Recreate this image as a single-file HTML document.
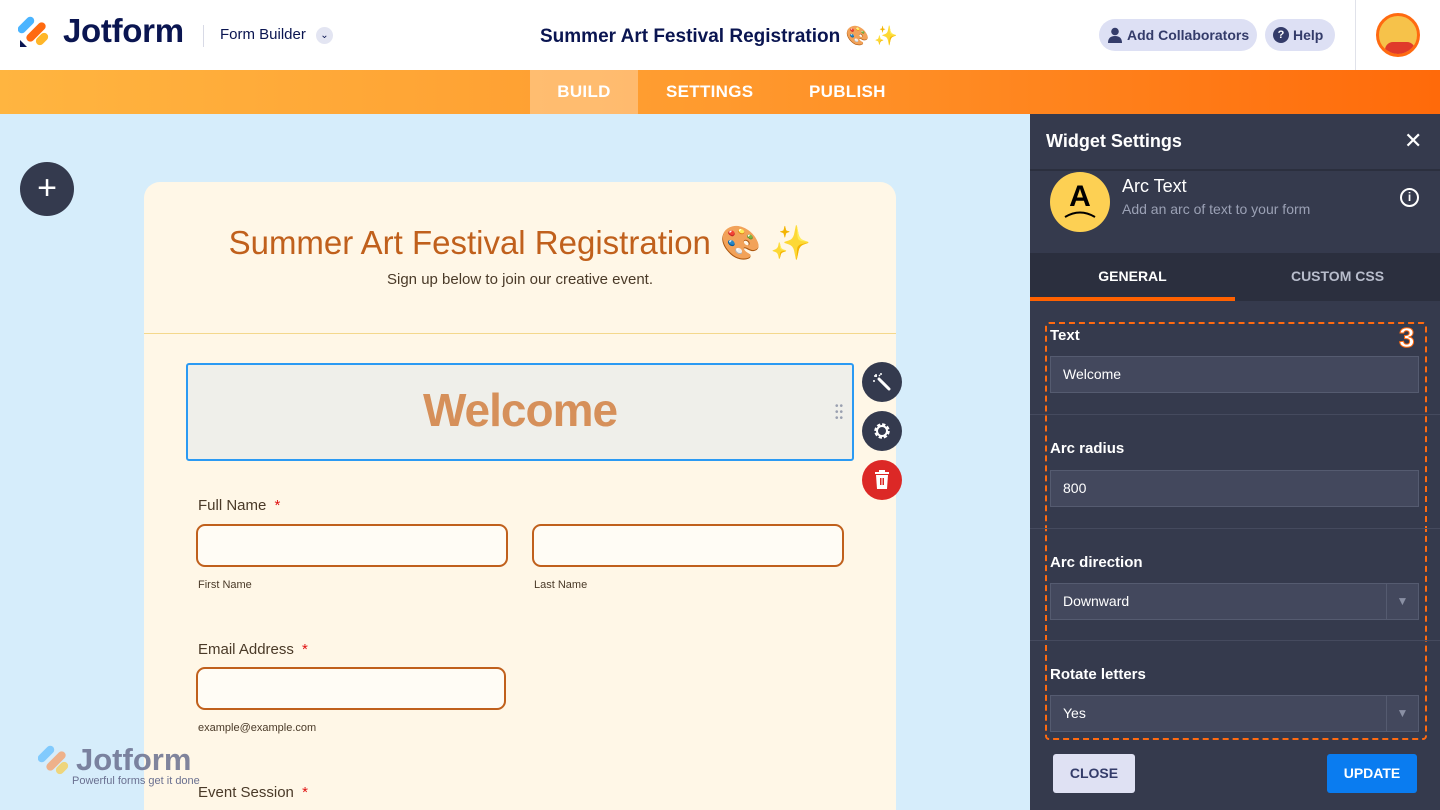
<!DOCTYPE html>
<html><head><meta charset="utf-8"><style>
*{box-sizing:border-box;margin:0;padding:0}
html,body{width:1440px;height:810px;overflow:hidden}
body{font-family:"Liberation Sans","Noto Sans CJK JP",sans-serif;background:#d6edfb;position:relative}
.abs{position:absolute}
.hdr{left:0;top:0;width:1440px;height:70px;background:#fff}
.nav{left:0;top:70px;width:1440px;height:44px;background:linear-gradient(90deg,#ffb540,#ff9a2e 50%,#ff6a0a)}
.nav div{position:absolute;top:0;height:44px;line-height:44px;color:#fff;font-weight:bold;font-size:17px;letter-spacing:.3px}
.pill{background:#dde0f4;color:#343c6a;border-radius:18px;height:32px;top:19px;font-weight:bold;font-size:14px;line-height:32px}
.card{left:144px;top:182px;width:752px;height:628px;background:#fff7e7;border-radius:16px 16px 0 0}
.lbl{color:#4a3a28;font-size:15px}
.inp{border:2px solid #c0601c;border-radius:9px;background:#fffcf5;height:43px}
.sub{color:#4a3a28;font-size:11px}
.panel{left:1030px;top:114px;width:410px;height:696px;background:#353a4d}
.fl{color:#fff;font-weight:bold;font-size:15px;left:20px}
.fi{left:20px;width:369px;height:37px;background:#43485d;border:1px solid #555b70;color:#fff;font-size:14px;line-height:35px;padding-left:12px}
.sep{left:0;width:410px;height:1px;background:#454a5e}
.rb{width:40px;height:40px;border-radius:50%;left:862px}
</style></head><body>
<div class="abs hdr"></div>
<svg class="abs" style="left:18px;top:16px" width="32" height="32" viewBox="0 0 32 32"><rect x="4" y="-1" width="8" height="20" rx="4" transform="rotate(45 8 9)" fill="#4ab4ff"/><rect x="14" y="4" width="8" height="24" rx="4" transform="rotate(45 18 16)" fill="#ff6a10"/><rect x="20" y="16" width="8" height="14" rx="4" transform="rotate(45 24 23)" fill="#ffb629"/><path d="M2 24 L2 31 L9 31Z" fill="#0a1551"/></svg>
<div class="abs" style="left:63px;top:12px;font-size:33px;font-weight:bold;color:#0a1551;letter-spacing:-.3px">Jotform</div>
<div class="abs" style="left:203px;top:25px;width:1px;height:22px;background:#d8dae6"></div>
<div class="abs" style="left:220px;top:26px;font-size:15px;color:#0a1551">Form Builder</div>
<div class="abs" style="left:316px;top:27px;width:17px;height:17px;border-radius:50%;background:#e3e5f2;color:#0a1551;font-size:10px;text-align:center;line-height:17px">⌄</div>
<div class="abs" style="left:540px;top:24px;font-size:19px;color:#0a1551;font-weight:bold">Summer Art Festival Registration 🎨 ✨</div>
<div class="abs pill" style="left:1099px;width:158px;padding-left:28px">Add Collaborators</div>
<svg class="abs" style="left:1108px;top:27px" width="14" height="16" viewBox="0 0 14 16"><circle cx="7" cy="4.5" r="3.8" fill="#343c6a"/><path d="M0 16 Q0 9 7 9 Q14 9 14 16Z" fill="#343c6a"/></svg>
<div class="abs pill" style="left:1265px;width:70px;padding-left:28px">Help</div>
<div class="abs" style="left:1273px;top:27px;width:16px;height:16px;border-radius:50%;background:#343c6a;color:#fff;font-size:11px;text-align:center;line-height:16px;font-weight:bold">?</div>
<div class="abs" style="left:1355px;top:0;width:1px;height:70px;background:#e0e2ea"></div>
<div class="abs" style="left:1376px;top:13px;width:44px;height:44px;border-radius:50%;background:#f6c24a;border:3px solid #ff6a10;overflow:hidden"><div style="position:absolute;left:6px;top:26px;width:30px;height:20px;background:#e03a2a;border-radius:8px 8px 0 0"></div></div>
<div class="abs nav"><div style="left:530px;width:108px;background:rgba(255,255,255,.3);text-align:center">BUILD</div><div style="left:666px">SETTINGS</div><div style="left:809px">PUBLISH</div></div>
<div class="abs" style="left:20px;top:162px;width:54px;height:54px;border-radius:50%;background:#343a4e;color:#fff;font-size:34px;text-align:center;line-height:52px">+</div>
<div class="abs card"></div>
<div class="abs" style="left:144px;top:224px;width:752px;text-align:center;font-size:33px;color:#c0601c">Summer Art Festival Registration 🎨 ✨</div>
<div class="abs" style="left:144px;top:271px;width:752px;text-align:center;font-size:15px;color:#4a3a28">Sign up below to join our creative event.</div>
<div class="abs" style="left:144px;top:333px;width:752px;height:1px;background:#f4d88c"></div>
<div class="abs" style="left:186px;top:363px;width:668px;height:98px;background:#efefea;border:2px solid #2b9af3;border-radius:3px"></div>
<div class="abs" style="left:186px;top:383px;width:668px;text-align:center;font-size:46px;font-weight:bold;color:#d6905a;letter-spacing:-1px">Welcome</div>
<div class="abs" style="left:835px;top:404px;color:#9aa0b0;font-size:10px;line-height:6px;letter-spacing:1px">••<br>••<br>••</div>
<div class="abs rb" style="top:362px;background:#343a4e"></div>
<svg class="abs" style="left:872px;top:372px" width="20" height="20" viewBox="0 0 20 20"><path d="M7 7 L17 17" stroke="#fff" stroke-width="3" stroke-linecap="round"/><path d="M4 2v3M2 4h3M9 1v2M1 9h2M7 3l1 1" stroke="#fff" stroke-width="1.5"/></svg>
<div class="abs rb" style="top:411px;background:#343a4e"></div>
<svg class="abs" style="left:872px;top:421px" width="20" height="20" viewBox="0 0 20 20"><circle cx="10" cy="10" r="6" fill="none" stroke="#fff" stroke-width="3.5" stroke-dasharray="3 1.7"/><circle cx="10" cy="10" r="5" fill="none" stroke="#fff" stroke-width="2"/></svg>
<div class="abs rb" style="top:460px;background:#dc2826"></div>
<svg class="abs" style="left:874px;top:470px" width="16" height="20" viewBox="0 0 16 20"><rect x="1" y="2" width="14" height="2" fill="#fff"/><rect x="5" y="0" width="6" height="2" fill="#fff"/><path d="M2 5h12l-1 14H3Z" fill="#fff"/><rect x="6" y="8" width="1.5" height="7" fill="#dc2826"/><rect x="8.5" y="8" width="1.5" height="7" fill="#dc2826"/></svg>
<div class="abs lbl" style="left:198px;top:497px">Full Name <span style="color:#e01010;margin-left:4px">*</span></div>
<div class="abs inp" style="left:196px;top:524px;width:312px"></div>
<div class="abs inp" style="left:532px;top:524px;width:312px"></div>
<div class="abs sub" style="left:198px;top:579px">First Name</div>
<div class="abs sub" style="left:534px;top:579px">Last Name</div>
<div class="abs lbl" style="left:198px;top:641px">Email Address <span style="color:#e01010;margin-left:4px">*</span></div>
<div class="abs inp" style="left:196px;top:667px;width:310px"></div>
<div class="abs sub" style="left:198px;top:722px">example@example.com</div>
<div class="abs lbl" style="left:198px;top:784px">Event Session <span style="color:#e01010;margin-left:4px">*</span></div>
<div class="abs" style="left:38px;top:744px;width:32px;height:34px;opacity:.6"><svg width="32" height="34" viewBox="0 0 32 32"><rect x="4" y="-1" width="8" height="20" rx="4" transform="rotate(45 8 9)" fill="#4ab4ff"/><rect x="14" y="4" width="8" height="24" rx="4" transform="rotate(45 18 16)" fill="#ff8a40"/><rect x="20" y="16" width="8" height="14" rx="4" transform="rotate(45 24 23)" fill="#ffc629"/></svg></div>
<div class="abs" style="left:76px;top:742px;font-size:31px;font-weight:bold;color:#6a7090;opacity:.85">Jotform</div>
<div class="abs" style="left:72px;top:775px;font-size:11px;color:#6a7090">Powerful forms get it done</div>
<div class="abs panel">
<div class="abs" style="left:16px;top:17px;color:#fff;font-weight:bold;font-size:18px">Widget Settings</div>
<div class="abs" style="left:374px;top:14px;color:#fff;font-size:22px">✕</div>
<div class="abs" style="left:0;top:55px;width:410px;height:2px;background:#2b2f3e"></div>
<div class="abs" style="left:20px;top:58px;width:60px;height:60px;border-radius:50%;background:#fdd053;text-align:center;font-weight:bold;font-size:30px;line-height:50px;color:#000">A</div>
<svg class="abs" style="left:32px;top:94px" width="36" height="12"><path d="M3 9 Q18 0 33 9" stroke="#000" stroke-width="2" fill="none"/></svg>
<div class="abs" style="left:92px;top:62px;color:#fff;font-size:18px">Arc Text</div>
<div class="abs" style="left:92px;top:87px;color:#9ba1b5;font-size:14px">Add an arc of text to your form</div>
<div class="abs" style="left:370px;top:74px;width:19px;height:19px;border:2px solid #fff;border-radius:50%;color:#fff;font-size:12px;text-align:center;line-height:15px;font-weight:bold">i</div>
<div class="abs" style="left:0;top:139px;width:410px;height:48px;background:#2b2f3e"></div>
<div class="abs" style="left:0;top:154px;width:205px;text-align:center;color:#fff;font-weight:bold;font-size:14px">GENERAL</div>
<div class="abs" style="left:205px;top:154px;width:205px;text-align:center;color:#b8bdcc;font-weight:bold;font-size:14px">CUSTOM CSS</div>
<div class="abs" style="left:0;top:183px;width:205px;height:4px;background:#ff6100"></div>
<div class="abs" style="left:15px;top:208px;width:382px;height:418px;border:2px dashed #ff6a10;border-radius:4px"></div>
<div class="abs" style="left:369px;top:208px;color:#fff;font-weight:bold;font-size:28px;-webkit-text-stroke:1px #ff6a10">3</div>
<div class="abs fl" style="top:213px">Text</div>
<div class="abs fi" style="top:242px">Welcome</div>
<div class="abs sep" style="top:300px"></div>
<div class="abs fl" style="top:326px">Arc radius</div>
<div class="abs fi" style="top:356px">800</div>
<div class="abs sep" style="top:414px"></div>
<div class="abs fl" style="top:440px">Arc direction</div>
<div class="abs fi" style="top:469px">Downward<span style="position:absolute;right:0;top:0;width:32px;height:35px;border-left:1px solid #555b70;text-align:center;color:#8a90a4;font-size:12px">▼</span></div>
<div class="abs sep" style="top:526px"></div>
<div class="abs fl" style="top:552px">Rotate letters</div>
<div class="abs fi" style="top:581px">Yes<span style="position:absolute;right:0;top:0;width:32px;height:35px;border-left:1px solid #555b70;text-align:center;color:#8a90a4;font-size:12px">▼</span></div>
<div class="abs" style="left:23px;top:640px;width:82px;height:39px;background:#dfe1f3;border-radius:3px;color:#343c6a;font-weight:bold;font-size:14px;text-align:center;line-height:39px">CLOSE</div>
<div class="abs" style="left:297px;top:640px;width:90px;height:39px;background:#0a7cf0;border-radius:3px;color:#fff;font-weight:bold;font-size:14px;text-align:center;line-height:39px">UPDATE</div>
</div>
</body></html>
